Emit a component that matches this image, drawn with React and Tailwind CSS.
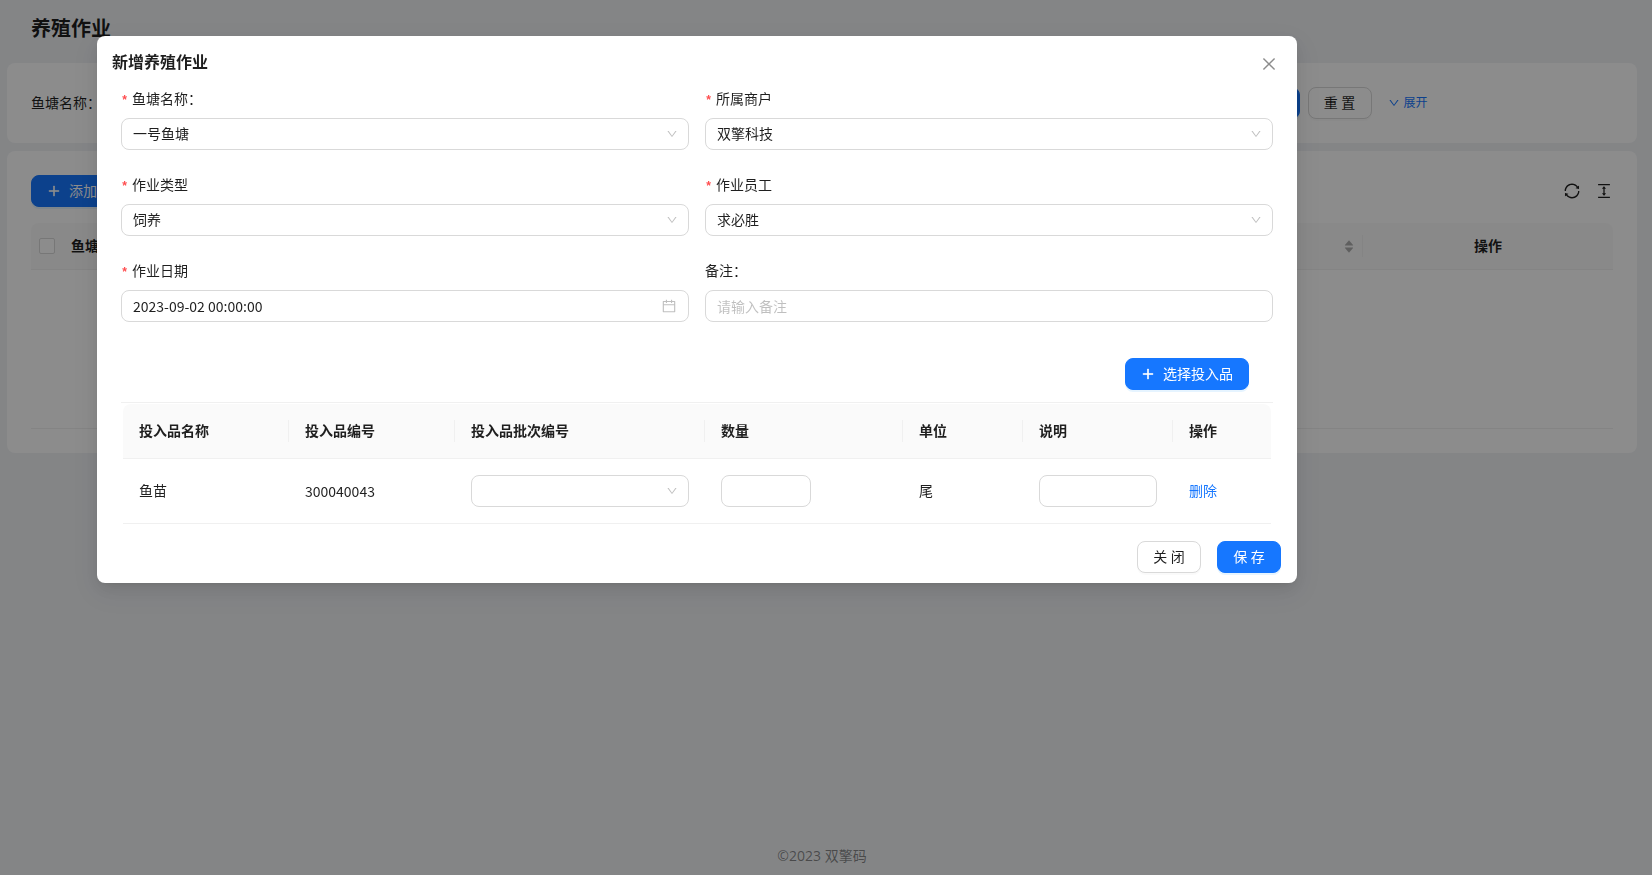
import React from "react";
import {
  AiOutlineDown,
  AiOutlineSync,
  AiOutlineColumnHeight,
  AiOutlineCalendar,
  AiOutlineClose,
  AiOutlinePlus,
  AiFillCaretUp,
  AiFillCaretDown,
} from "react-icons/ai";

const control =
  "h-8 w-full rounded-lg border border-[#d9d9d9] bg-white px-[11px] text-sm text-black/88 outline-none placeholder:text-black/25";

function Button({ primary, children }) {
  const look = primary
    ? "border-[#1677ff] bg-[#1677ff] text-white shadow-[0_2px_0_rgba(5,145,255,0.1)]"
    : "border-[#d9d9d9] bg-white text-black/88 shadow-[0_2px_0_rgba(0,0,0,0.02)]";
  return (
    <button
      type="button"
      className={`flex h-8 min-w-16 items-center justify-center gap-2 whitespace-nowrap rounded-lg border px-[15px] text-sm ${look}`}
    >
      {children}
    </button>
  );
}

function Plus() {
  return <AiOutlinePlus className="size-[14px] [stroke-width:48]" />;
}

function Select({ id, label, options = [] }) {
  return (
    <div className="relative">
      <select id={id} aria-label={label} className={`${control} appearance-none`}>
        {options.map((o) => (
          <option key={o}>{o}</option>
        ))}
      </select>
      <AiOutlineDown className="pointer-events-none absolute top-[10px] right-[11px] size-3 text-black/25" />
    </div>
  );
}

function Field({ id, label, required, children }) {
  return (
    <div className="flex flex-col gap-2">
      <label htmlFor={id} className="flex h-[22px] items-center text-sm leading-[22px]">
        {required && (
          <span className="mr-1 w-[7px] pt-1 font-['Liberation_Mono'] text-xs leading-4 font-bold text-[#ff4d4f]">
            *
          </span>
        )}
        {label}
      </label>
      {children}
    </div>
  );
}

const columns = [
  { title: "投入品名称", width: "w-[166px]" },
  { title: "投入品编号", width: "w-[166px]" },
  { title: "投入品批次编号", width: "w-[250px]" },
  { title: "数量", width: "w-[198px]" },
  { title: "单位", width: "w-[120px]" },
  { title: "说明", width: "w-[150px]" },
  { title: "操作", width: "w-[98px]" },
];

function InputsTable() {
  return (
    <table className="w-full table-fixed border-separate border-spacing-0 text-left text-sm leading-[22px]">
      <thead>
        <tr>
          {columns.map((c, i) => (
            <th
              key={c.title}
              className={`border-b border-[#f0f0f0] bg-[#fafafa] py-4 font-semibold first:rounded-tl-lg last:rounded-tr-lg ${c.width}`}
            >
              <div className={`px-4 ${i < columns.length - 1 ? "border-r border-[#f0f0f0]" : ""}`}>{c.title}</div>
            </th>
          ))}
        </tr>
      </thead>
      <tbody>
        <tr className="[&>td]:border-b [&>td]:border-[#f0f0f0] [&>td]:p-4">
          <td>鱼苗</td>
          <td className="font-['Noto_Sans_CJK_SC',sans-serif]">300040043</td>
          <td>
            <Select label="投入品批次编号" />
          </td>
          <td>
            <input aria-label="数量" className={`${control} max-w-[90px]`} />
          </td>
          <td>尾</td>
          <td>
            <input aria-label="说明" className={control} />
          </td>
          <td>
            <a href="#delete" className="text-[#1677ff]">
              删除
            </a>
          </td>
        </tr>
      </tbody>
    </table>
  );
}

function Dialog() {
  return (
    <div
      role="dialog"
      aria-label="新增养殖作业"
      className="w-full max-w-[1200px] rounded-lg bg-white pb-[10px] shadow-[0_6px_16px_0_rgba(0,0,0,0.08),0_3px_6px_-4px_rgba(0,0,0,0.12),0_9px_28px_8px_rgba(0,0,0,0.05)]"
    >
      <header className="flex h-[52px] items-center justify-between pr-[19px] pl-[15px]">
        <h2 className="text-base font-semibold">新增养殖作业</h2>
        <button type="button" aria-label="关闭" className="pt-1 text-black/45">
          <AiOutlineClose className="size-[18px]" />
        </button>
      </header>

      <div className="px-6">
        <form className="grid grid-cols-2 gap-x-4 gap-y-6">
          <Field id="pond" label="鱼塘名称：" required>
            <Select id="pond" options={["一号鱼塘"]} />
          </Field>
          <Field id="merchant" label="所属商户" required>
            <Select id="merchant" options={["双擎科技"]} />
          </Field>
          <Field id="kind" label="作业类型" required>
            <Select id="kind" options={["饲养"]} />
          </Field>
          <Field id="worker" label="作业员工" required>
            <Select id="worker" options={["求必胜"]} />
          </Field>
          <Field id="date" label="作业日期" required>
            <div className="flex h-8 items-center rounded-lg border border-[#d9d9d9] px-[11px]">
              <input
                id="date"
                defaultValue="2023-09-02 00:00:00"
                className="min-w-0 flex-1 font-['Noto_Sans_CJK_SC',sans-serif] text-sm outline-none"
              />
              <AiOutlineCalendar className="size-4 text-black/25" />
            </div>
          </Field>
          <Field id="remark" label="备注：">
            <input id="remark" placeholder="请输入备注" className={control} />
          </Field>
        </form>

        <div className="mt-9 flex justify-end pr-6 pb-3">
          <Button primary>
            <Plus />
            选择投入品
          </Button>
        </div>
        <div className="border-t border-[#f0f0f0] px-[2px] pt-px">
          <InputsTable />
        </div>
      </div>

      <footer className="mt-[17px] flex justify-end gap-4 pr-4">
        <Button>关 闭</Button>
        <Button primary>保 存</Button>
      </footer>
    </div>
  );
}

function Page() {
  return (
    <div className="flex min-h-screen flex-col bg-[#f0f2f5] pr-[15px] pl-[7px]">
      <h1 className="px-6 pt-[13px] pb-[18px] text-xl leading-8 font-semibold">养殖作业</h1>

      <section className="grid grid-cols-4 items-center gap-6 rounded-lg bg-white p-6">
        <div className="col-span-3 flex items-center gap-2">
          <label htmlFor="search" className="text-sm whitespace-nowrap">
            鱼塘名称：
          </label>
          <input id="search" className={`${control} max-w-[280px]`} />
        </div>
        <div className="flex items-center gap-2">
          <Button primary>查 询</Button>
          <Button>重 置</Button>
          <a href="#expand" className="ml-2 flex items-center gap-1 text-xs whitespace-nowrap text-[#1677ff]">
            <AiOutlineDown className="size-3" />
            展开
          </a>
        </div>
      </section>

      <section className="mt-2 rounded-lg bg-white p-6">
        <div className="mb-4 flex items-center justify-between">
          <Button primary>
            <Plus />
            添加
          </Button>
          <div className="flex gap-[14px]">
            <button type="button" aria-label="刷新">
              <AiOutlineSync className="size-[18px]" />
            </button>
            <button type="button" aria-label="密度">
              <AiOutlineColumnHeight className="size-[18px]" />
            </button>
          </div>
        </div>
        <table className="w-full table-fixed border-separate border-spacing-0 text-sm leading-[22px]">
          <thead>
            <tr className="[&>th]:border-b [&>th]:border-[#f0f0f0] [&>th]:bg-[#fafafa] [&>th]:py-3 [&>th]:font-semibold">
              <th className="w-8 rounded-tl-lg pl-2">
                <input
                  type="checkbox"
                  aria-label="全选"
                  className="block size-4 appearance-none rounded-xs border border-[#d9d9d9] bg-white"
                />
              </th>
              <th>
                <div className="flex items-center justify-between border-r border-[#f0f0f0] pr-[7px] pl-2">
                  鱼塘名称
                  <span className="flex flex-col text-black/30">
                    <AiFillCaretUp className="-mb-[5px] size-3" />
                    <AiFillCaretDown className="size-3" />
                  </span>
                </div>
              </th>
              <th className="w-[250px] rounded-tr-lg text-center">操作</th>
            </tr>
          </thead>
          <tbody>
            <tr>
              <td colSpan={3} className="h-[159px] border-b border-[#f0f0f0]" />
            </tr>
          </tbody>
        </table>
      </section>

      <footer className="mt-auto pb-2 text-center text-sm leading-[22px] text-black/45">©2023 双擎码</footer>
    </div>
  );
}

export default function App() {
  return (
    <div className="font-['Open_Sans','Noto_Sans_CJK_SC',sans-serif] text-black/88">
      <Page />
      <div className="fixed inset-0 overflow-auto bg-black/45 pt-9 pl-[97px]">
        <Dialog />
      </div>
    </div>
  );
}
